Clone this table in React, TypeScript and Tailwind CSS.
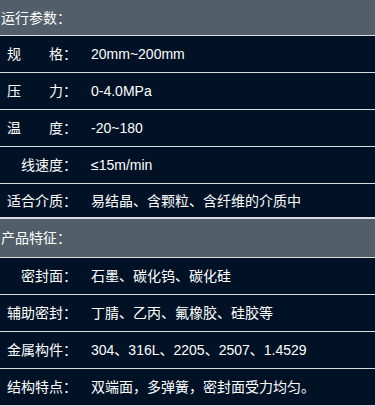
import React from "react";

const font = { fontFamily: '"Liberation Sans", Arial, "Noto Sans CJK SC", sans-serif' };

type Row = { label: string; value: string; last?: boolean; h?: string };

const group1: Row[] = [
  { label: "规\u3000\u3000格：", value: "20mm~200mm" },
  { label: "压\u3000\u3000力：", value: "0-4.0MPa" },
  { label: "温\u3000\u3000度：", value: "-20~180" },
  { label: "线速度：", value: "≤15m/min" },
  { label: "适合介质：", value: "易结晶、含颗粒、含纤维的介质中", last: true },
];

const group2: Row[] = [
  { label: "密封面：", value: "石墨、碳化钨、碳化硅" },
  { label: "辅助密封：", value: "丁腈、乙丙、氟橡胶、硅胶等" },
  { label: "金属构件：", value: "304、316L、2205、2507、1.4529" },
  { label: "结构特点：", value: "双端面，多弹簧，密封面受力均匀。" },
];

function DataRow({ label, value, last }: Row) {
  return (
    <div
      className={
        "flex items-center bg-[#011226] border-[#dcdcdc] " +
        (last ? "h-[35px] border-b-2" : "h-[37px] border-b")
      }
    >
      <div className="w-[84px] shrink-0 pl-[7px] pr-[7px] text-right whitespace-nowrap">{label}</div>
      <div className="pl-[7px] whitespace-nowrap">{value}</div>
    </div>
  );
}

function Header({ text, h }: { text: string; h: string }) {
  return (
    <div className={"flex items-center bg-[#525e6a] border-b border-[#dcdcdc] pl-[1px] " + h}>{text}</div>
  );
}

export default function App() {
  return (
    <div className="w-[375px] h-[406px] overflow-hidden bg-[#011226] text-white text-[14px] leading-[20px]" style={font}>
      <Header text="运行参数：" h="h-[36px]" />
      {group1.map((r) => (
        <DataRow key={r.label} {...r} />
      ))}
      <Header text="产品特征：" h="h-[39px]" />
      {group2.map((r) => (
        <DataRow key={r.label} {...r} />
      ))}
    </div>
  );
}
